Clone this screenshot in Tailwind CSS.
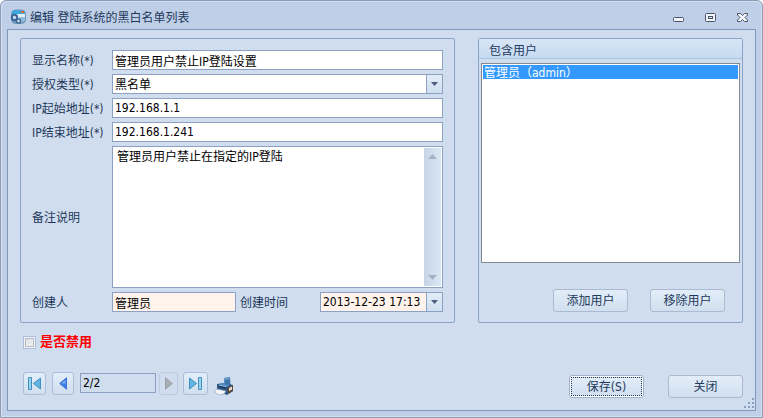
<!DOCTYPE html>
<html lang="zh-CN">
<head>
    <meta charset="UTF-8">
    <meta name="viewport" content="width=device-width, initial-scale=1.0">
    <title>编辑 登陆系统的黑白名单列表</title>
    <script src="https://cdn.jsdelivr.net/npm/@tailwindcss/browser@4"></script>
</head>
<body class="font-['DejaVu_Sans_Condensed','Noto_Sans_CJK_SC',sans-serif] text-[12px] leading-4 text-[#1e395b]">
    <div class="min-h-screen flex flex-col border border-[#8e9bb3] rounded-t-md bg-[#bfcfe7] px-[6px] pb-[6px] shadow-[inset_0_0_0_1px_#d3e0f2]">
        <!-- Barre de titre -->
        <header class="h-7 flex items-center pl-[3px] pr-[5px]">
            <svg class="w-4 h-4 mr-1 mt-1" viewBox="0 0 16 16">
                <rect x="1.500" y="1" width="14" height="13.500" rx="4" fill="#6c9dc6" stroke="#6f95ba"/>
                <path d="M2 5V4Q2 1.500 4.500 1.500H13q2 0 2 2.500V5z" fill="#38a9dc"/>
                <rect x="11" y="2" width="3" height="2" fill="#e2672c"/>
                <path d="M3 5h12v5q-1 3-5 3.500H7z" fill="#e2eff8"/>
                <path d="M9 8h6v2q-1 3-5 4z" fill="#93bcdc"/>
                <circle cx="4.500" cy="8.500" r="2.700" fill="#c3d9ec" stroke="#3c6794" stroke-width="2"/>
                <circle cx="8.500" cy="12" r="2" fill="#dceaf5" stroke="#3c6794" stroke-width="1.500"/>
            </svg>
            <h1 class="flex-1 mt-[6px]">编辑 登陆系统的黑白名单列表</h1>
            <div class="flex gap-[14px] mt-1">
                <button type="button" aria-label="最小化" class="w-[18px] h-4 flex items-center justify-center">
                    <svg width="13" height="13" viewBox="0 0 13 13"><rect x="1.500" y="6.500" width="10" height="4" rx="1" fill="#f2f6fb" stroke="#4a5368"/></svg>
                </button>
                <button type="button" aria-label="最大化" class="w-[18px] h-4 flex items-center justify-center">
                    <svg width="13" height="13" viewBox="0 0 13 13"><rect x="1.500" y="2.500" width="10" height="8" rx="1" fill="#f2f6fb" stroke="#4a5368"/><rect x="4.500" y="5.500" width="4" height="2" fill="#dde6f2" stroke="#4a5368"/></svg>
                </button>
                <button type="button" aria-label="关闭窗口" class="w-[18px] h-4 flex items-center justify-center">
                    <svg width="13" height="13" viewBox="0 0 13 13"><path d="M1.500 2.500h3l2 2 2-2h3v1.500l-2.500 2.500 2.500 2.500v1.500h-3l-2-2-2 2h-3V9L4 6.500 1.500 4z" fill="#f2f6fb" stroke="#4a5368"/></svg>
                </button>
            </div>
        </header>

        <form class="relative flex-1 flex flex-col border border-[#7f97bb] bg-[#d0ddee] px-3 pt-2">
            <div class="flex gap-[23px]">
                <!-- Formulaire -->
                <section class="flex-1 min-w-0 border border-[#8ba3c7] rounded-xs px-[11px] pt-[11px] pb-[10px] grid grid-cols-[80px_minmax(0,1fr)] gap-y-1 items-center">
                    <label for="nom" class="pt-[2px]">显示名称(*)</label>
                    <input id="nom" type="text" value="管理员用户禁止IP登陆设置" class="h-5 w-full min-w-0 border border-[#8ba0c2] bg-white px-[2px] text-black">

                    <label for="type" class="pt-[2px]">授权类型(*)</label>
                    <div class="relative h-5">
                        <select id="type" class="appearance-none block h-5 w-full border border-[#8ba0c2] bg-white pl-[2px] pt-px text-black">
                            <option>黑名单</option>
                            <option>白名单</option>
                        </select>
                        <span class="absolute top-px right-px bottom-px w-4 border-l border-[#8ba0c2] bg-linear-to-b from-[#e3edf9] to-[#cfdfef] flex items-center justify-center pointer-events-none">
                            <svg width="7" height="4" viewBox="0 0 7 4"><path d="M0 0h7L3.500 4z" fill="#4c5c80"/></svg>
                        </span>
                    </div>

                    <label for="debut" class="pt-[2px] whitespace-nowrap">IP起始地址(*)</label>
                    <input id="debut" type="text" value="192.168.1.1" class="h-5 w-full min-w-0 border border-[#8ba0c2] bg-white px-[2px] text-black">

                    <label for="fin" class="pt-[2px] whitespace-nowrap">IP结束地址(*)</label>
                    <input id="fin" type="text" value="192.168.1.241" class="h-5 w-full min-w-0 border border-[#8ba0c2] bg-white px-[2px] text-black">

                    <label for="note" class="pt-[2px]">备注说明</label>
                    <div class="h-[142px] flex border border-[#8ba0c2] bg-white p-px">
                        <textarea id="note" class="flex-1 min-w-0 resize-none overflow-hidden px-[3px] pt-px text-black outline-none">管理员用户禁止在指定的IP登陆</textarea>
                        <div class="w-[17px] bg-linear-to-r from-[#c6d5e7] to-[#dae6f3] flex flex-col items-center justify-between py-[6px]">
                            <svg width="9" height="5" viewBox="0 0 9 5"><path d="M0 5h9L4.500 0z" fill="#a3b1c8"/></svg>
                            <svg width="9" height="5" viewBox="0 0 9 5"><path d="M0 0h9L4.500 5z" fill="#a3b1c8"/></svg>
                        </div>
                    </div>

                    <label for="auteur" class="pt-[2px]">创建人</label>
                    <div class="flex items-center">
                        <input id="auteur" type="text" value="管理员" readonly class="h-5 flex-1 min-w-0 border border-[#8ba0c2] bg-[#fff3ec] px-[2px] text-black">
                        <label for="date" class="w-[84px] pl-1 pt-[2px]">创建时间</label>
                        <div class="h-5 w-[123px] flex border border-[#8ba0c2]">
                            <input id="date" type="text" value="2013-12-23 17:13" readonly class="flex-1 min-w-0 bg-[#fff3ec] pl-[2px] text-black">
                            <button type="button" aria-label="选择时间" class="w-4 border-l border-[#8ba0c2] bg-linear-to-b from-[#e3edf9] to-[#cfdfef] flex items-center justify-center">
                                <svg width="7" height="4" viewBox="0 0 7 4"><path d="M0 0h7L3.500 4z" fill="#4c5c80"/></svg>
                            </button>
                        </div>
                    </div>
                </section>

                <!-- Utilisateurs -->
                <section class="w-[265px] shrink-0 border border-[#8ba3c7] rounded-xs flex flex-col">
                    <h2 id="titre-liste" class="h-5 border-b border-[#a9c4e2] bg-linear-to-b from-[#d8e6f7] to-[#c6daf0] pl-[10px] pt-1">包含用户</h2>
                    <ul role="listbox" aria-labelledby="titre-liste" class="mx-[2px] mt-1 h-[200px] border border-[#828790] bg-white p-px">
                        <li role="option" aria-selected="true" class="h-[14px] leading-4 bg-[#3399ff] pl-px text-white">管理员（admin）</li>
                    </ul>
                    <div class="flex justify-end gap-[22px] pr-[17px] mt-[26px]">
                        <button type="button" class="w-[75px] h-[23px] border border-[#abbad0] rounded-[3px] bg-linear-to-b from-[#e2edf9] to-[#d0dfee]">添加用户</button>
                        <button type="button" class="w-[75px] h-[23px] border border-[#abbad0] rounded-[3px] bg-linear-to-b from-[#e2edf9] to-[#d0dfee]">移除用户</button>
                    </div>
                </section>
            </div>

            <label class="flex items-center self-start gap-1 mt-[11px] ml-[3px] text-[13px] font-bold text-[#ff0000]">
                <input type="checkbox" class="appearance-none w-[13px] h-[13px] border border-[#abbfdd] bg-linear-to-br from-[#dcdfe3] to-[#f4f4f4] shadow-[inset_0_0_0_1px_#f0f3f7,inset_0_0_0_2px_#b4b9c2]">
                是否禁用
            </label>

            <div class="flex items-start justify-between mt-[22px] pl-[3px]">
                <!-- Pagination -->
                <div class="flex items-start">
                    <button type="button" aria-label="第一条" class="w-[23px] h-[23px] mr-[6px] border border-[#abbdd8] rounded-[3px] bg-linear-to-b from-[#e2edf9] to-[#d0dfee] flex items-center justify-center">
                        <svg width="13" height="13" viewBox="0 0 13 13"><path d="M.5.5h3v12h-3z" fill="#9ad4ec" stroke="#3f8fc2"/><path d="M12.500 1v11L5.500 6.500z" fill="#62b4e0" stroke="#3f8fc2"/></svg>
                    </button>
                    <button type="button" aria-label="上一条" class="w-[22px] h-[23px] mr-[6px] border border-[#abbdd8] rounded-[3px] bg-linear-to-b from-[#e2edf9] to-[#d0dfee] flex items-center justify-center">
                        <svg width="8" height="13" viewBox="0 0 8 13"><path d="M7.500 .8v11.400L.7 6.500z" fill="#3f7ee8" stroke="#3a74d4"/><path d="M6.500 3v3.500H2.500z" fill="#79b0f4"/></svg>
                    </button>
                    <input type="text" value="2/2" aria-label="页码" class="w-[76px] h-5 mt-px mr-[3px] border border-[#8ba0c2] px-[2px] text-black">
                    <button type="button" aria-label="下一条" disabled class="w-[19px] h-[23px] mr-[5px] border border-[#bccadf] rounded-[3px] flex items-center justify-center">
                        <svg width="8" height="13" viewBox="0 0 8 13"><path d="M.5.8v11.400L7.300 6.500z" fill="#aaaeb5" stroke="#999ea8"/></svg>
                    </button>
                    <button type="button" aria-label="最后一条" class="w-[25px] h-[23px] mr-[6px] border border-[#abbdd8] rounded-[3px] bg-linear-to-b from-[#e2edf9] to-[#d0dfee] flex items-center justify-center">
                        <svg width="13" height="13" viewBox="0 0 13 13"><path d="M9.500.5h3v12h-3z" fill="#9ad4ec" stroke="#3f8fc2"/><path d="M.5 1v11l7-5.500z" fill="#62b4e0" stroke="#3f8fc2"/></svg>
                    </button>
                    <button type="button" aria-label="打印" class="mt-[5px]">
                        <svg width="20" height="18" viewBox="0 0 20 18">
                            <path d="M10 1l6-1 .5 8-6 1z" fill="#3f77ae"/>
                            <path d="M10 1l6-1 .3 2-6 1z" fill="#6d9fcb"/>
                            <path d="M3 7l8-1 8 2v6l-6 4-10-4z" fill="#2b5787"/>
                            <path d="M4 7l7-1 5 2-3 2z" fill="#4d86bd"/>
                            <path d="M5 8l7 1.500" stroke="#9cc2e0"/>
                            <path d="M13 11l6-3v6l-5 3z" fill="#5d4a3c"/>
                            <path d="M15 11l3-1.500v3L15 14z" fill="#eadfd2"/>
                            <path d="M5 9l7 2v1L5 10z" fill="#132c4c"/>
                            <path d="M0 15l3-3 9 2-2 3-5 1z" fill="#f2f6fa" stroke="#8796a8" stroke-width=".6"/>
                        </svg>
                    </button>
                </div>
                <div class="flex gap-6 mt-[3px]">
                    <button type="submit" class="w-[75px] h-[23px] border border-[#9fb0ca] rounded-[3px] bg-white p-px">
                        <span class="flex h-full items-center justify-center border border-dotted border-[#1e395b] bg-linear-to-b from-[#e2edf9] to-[#d0dfee]">保存(S)</span>
                    </button>
                    <button type="button" class="w-[75px] h-[23px] border border-[#abbad0] rounded-[3px] bg-linear-to-b from-[#e2edf9] to-[#d0dfee]">关闭</button>
                </div>
            </div>

            <svg class="absolute right-px bottom-px" width="11" height="11" viewBox="0 0 11 11" fill="#8a9fc0">
                <path d="M9 0h2v2H9zM9 4h2v2H9zM9 8h2v2H9zM5 4h2v2H5zM5 8h2v2H5zM1 8h2v2H1z"/>
            </svg>
        </form>
    </div>
</body>
</html>
